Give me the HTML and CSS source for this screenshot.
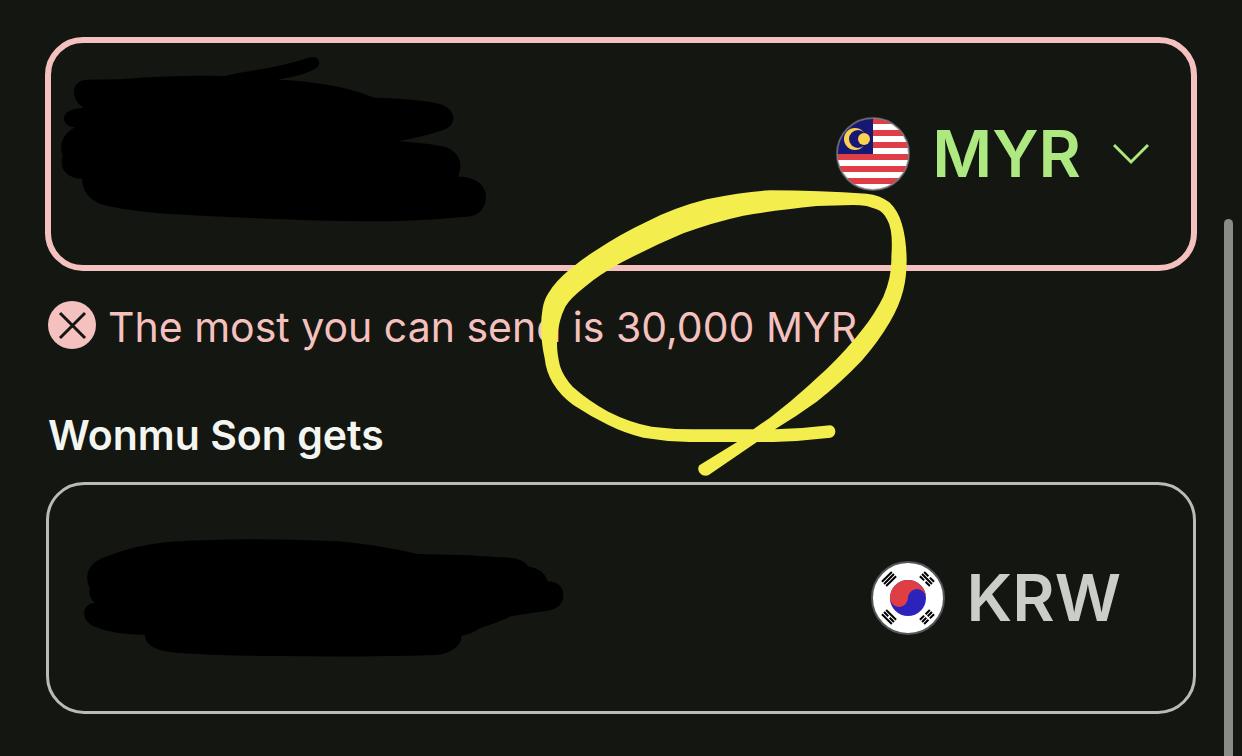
FILE: index.html
```html
<!DOCTYPE html>
<html lang="en">
<head>
    <meta charset="UTF-8">
    <meta name="viewport" content="width=device-width, initial-scale=1.0">
    <title>Send money</title>
    <link rel="stylesheet" href="styles.css">
</head>
<body>
    <main class="calculator">
        <div class="field field-error">
            <input class="amount" type="text" aria-label="You send" aria-describedby="send-error">
            <svg class="scribble scribble-send" viewBox="33 39 1347 561" aria-hidden="true">
                <path d="M140 149 L245 148 Q390 134 555 138 Q600 128 650 120 Q740 106 811 82 C832 75 846 98 832 112 Q795 137 712 149 Q890 156 1002 203 Q1130 206 1190 220 C1250 232 1255 285 1210 300 Q1150 320 1074 334 Q1170 340 1218 352 C1262 368 1270 410 1253 440 C1300 438 1338 462 1338 500 C1338 535 1315 558 1280 560 Q1130 574 980 574 Q700 570 390 552 Q260 543 180 522 C145 505 126 480 127 446 C90 446 65 425 65 398 Q65 385 68 377 C56 345 68 310 106 292 C85 292 72 280 72 265 C73 245 95 236 130 233 C90 205 92 152 140 149 Z"/>
            </svg>
            <button class="currency currency-picker" type="button">
                <svg class="flag" viewBox="0 0 74 74" aria-hidden="true">
                    <clipPath id="round"><circle cx="37" cy="37" r="36"/></clipPath>
                    <g clip-path="url(#round)">
                        <rect width="74" height="74" fill="#fff"/>
                        <path d="M0 4h74M0 16h74M0 28h74M0 40h74M0 52h74M0 64h74" stroke="#df3e46" stroke-width="6"/>
                        <rect width="37" height="37" fill="#171873"/>
                        <circle cx="19" cy="22" r="11" fill="#fbd250"/>
                        <circle cx="22" cy="22" r="9" fill="#171873"/>
                        <circle cx="28" cy="22" r="6" fill="#fbd250"/>
                    </g>
                    <circle cx="37" cy="37" r="36" fill="none" stroke="#77777d" stroke-opacity=".7" stroke-width="2"/>
                </svg>
                <span>MYR</span>
                <svg class="chevron" viewBox="0 0 36 22" aria-hidden="true">
                    <path d="M1 2l17 17L35 2" fill="none" stroke="currentColor" stroke-width="3"/>
                </svg>
            </button>
        </div>

        <div class="error" id="send-error">
            <svg class="error-icon" viewBox="0 0 48 48" aria-hidden="true">
                <circle cx="24" cy="24" r="24" fill="#f5c1bf"/>
                <path d="M12 12l25 25M37 12L12 37" stroke="#141611" stroke-width="3"/>
            </svg>
            <span>The most you can send is 30,000 MYR</span>
        </div>

        <label class="label" for="receive">Wonmu Son gets</label>
        <div class="field field-receive">
            <input class="amount" id="receive" type="text">
            <svg class="scribble scribble-receive" viewBox="-60 -102 1590 552" aria-hidden="true">
                <path d="M62 206 C45 170 55 130 115 112 Q200 77 300 69 Q510 53 810 67 Q930 78 1045 105 L1200 109 L1320 116 Q1360 118 1380 143 Q1425 150 1436 187 C1465 187 1484 205 1483 230 C1482 255 1465 270 1435 275 Q1380 282 1325 292 Q1280 313 1232 328 Q1210 345 1178 350 C1176 380 1150 403 1100 408 Q880 415 620 411 Q450 410 320 401 C260 395 228 378 228 348 Q120 345 75 322 C35 303 35 255 78 251 Q58 238 62 206 Z"/>
            </svg>
            <div class="currency">
                <svg class="flag" viewBox="0 0 74 74" aria-hidden="true">
                    <circle cx="37" cy="37" r="36" fill="#fff" stroke="#55565a" stroke-width="2"/>
                    <circle cx="37" cy="37" r="18" fill="#2c23bd"/>
                    <path d="M19 37a18 18 0 0 1 36 0a9 9 0 0 0-18 0a9 9 0 0 1-18 0z" fill="#df3e43"/>
                    <g stroke="#000" stroke-width="2">
                        <path transform="translate(18 18) rotate(-45)" d="M-7-3H7M-7 0H7M-7 3H7"/>
                        <path transform="translate(56 18) rotate(45)" d="M-7-3H-1M1-3H7M-7 0H7M-7 3H-1M1 3H7"/>
                        <path transform="translate(18 56) rotate(45)" d="M-7-3H7M-7 0H-1M1 0H7M-7 3H7"/>
                        <path transform="translate(56 56) rotate(-45)" d="M-7-3H-1M1-3H7M-7 0H-1M1 0H7M-7 3H-1M1 3H7"/>
                    </g>
                </svg>
                <span>KRW</span>
            </div>
        </div>

        <!-- Hand drawn ring around the limit -->
        <svg class="marker" viewBox="0 0 1170 930" aria-hidden="true">
            <path d="M900 736 C920 738 922 768 902 773 L800 783 L730 786 H480 Q410 785 340 773 Q285 760 235 735 Q180 708 130 675 Q90 645 68 608 Q48 575 44 535 Q34 490 34 450 Q32 420 38 385 Q42 360 55 340 Q75 305 120 268 Q155 238 190 216 Q270 162 350 125 Q435 82 530 58 Q640 34 720 31 Q870 32 1010 41 Q1050 45 1078 67 Q1104 92 1115 130 Q1129 175 1130 240 Q1130 290 1120 330 Q1108 378 1080 425 Q1045 485 995 542 Q930 610 860 665 Q800 708 735 748 Q820 746 900 736 Z M535 886 C515 893 497 872 508 856 L625 784 L670 748 L720 713 L780 665 L830 622 L890 567 Q950 510 1000 445 Q1035 400 1060 350 Q1086 290 1084 230 Q1090 150 1072 120 Q1060 95 1040 88 L1010 78 Q990 75 970 75 L860 78 Q740 90 640 107 Q545 128 460 160 Q360 202 270 250 Q210 283 165 320 Q120 355 106 380 Q86 420 82 470 Q78 510 90 558 Q100 590 128 620 Q175 662 235 695 Q300 728 365 740 Q430 748 490 748 H735 L682 785 Z"/>
        </svg>
    </main>
    <div class="scroll-thumb"></div>
</body>
</html>
```
FILE: styles.css
```css
* {
    box-sizing: border-box;
}

body {
    margin: 0;
    background-color: #141611;
    color: #f3f5f0;
    font-family: Inter, "Liberation Sans", sans-serif;
    overflow: hidden;
}

.calculator {
    position: relative;
    padding: 37px 45px 42px;
}

.field {
    position: relative;
    display: flex;
    align-items: center;
    border-radius: 38px;
}

.field-error {
    min-height: 234px;
    padding: 0 42px;
    border: 6px solid #f5c1bf;
}

.field-receive {
    min-height: 232px;
    margin: 21px 1px 0;
    padding: 0 72px 0 42px;
    border: 3px solid #b9bbb6;
}

.amount {
    flex: 1;
    min-width: 0;
    padding: 0;
    border: none;
    outline: none;
    background: none;
    color: inherit;
    font: inherit;
    font-size: 65px;
}

.scribble {
    position: absolute;
    top: 0;
    left: 0;
    fill: #000;
    pointer-events: none;
}

.scribble-send {
    width: 449px;
    height: 187px;
}

.scribble-receive {
    width: 530px;
    height: 184px;
}

.currency {
    display: flex;
    align-items: center;
    color: #cbcec7;
    font-size: 65px;
    font-weight: 600;
    line-height: 80px;
}

.currency-picker {
    padding: 0;
    border: none;
    background: none;
    color: #aee880;
    font-family: inherit;
    cursor: pointer;
}

.flag {
    width: 74px;
    height: 74px;
    margin-right: 22px;
}

.chevron {
    width: 36px;
    height: 22px;
    margin-left: 32px;
}

.error {
    display: flex;
    align-items: flex-start;
    gap: 12px;
    margin: 30px 3px 0;
    color: #f5c1bf;
    font-size: 41px;
    line-height: 52px;
}

.error-icon {
    flex: none;
    width: 48px;
    height: 48px;
}

.label {
    display: block;
    margin: 56px 3px 0;
    font-size: 41px;
    font-weight: 600;
    line-height: 52px;
}

.marker {
    position: absolute;
    top: 180px;
    left: 530px;
    width: 390px;
    height: 310px;
    fill: #f3ed4d;
    pointer-events: none;
}

.scroll-thumb {
    position: fixed;
    top: 219px;
    right: 9px;
    bottom: 0;
    width: 9px;
    border-radius: 5px 5px 0 0;
    background-color: #8a8c88;
}
```
